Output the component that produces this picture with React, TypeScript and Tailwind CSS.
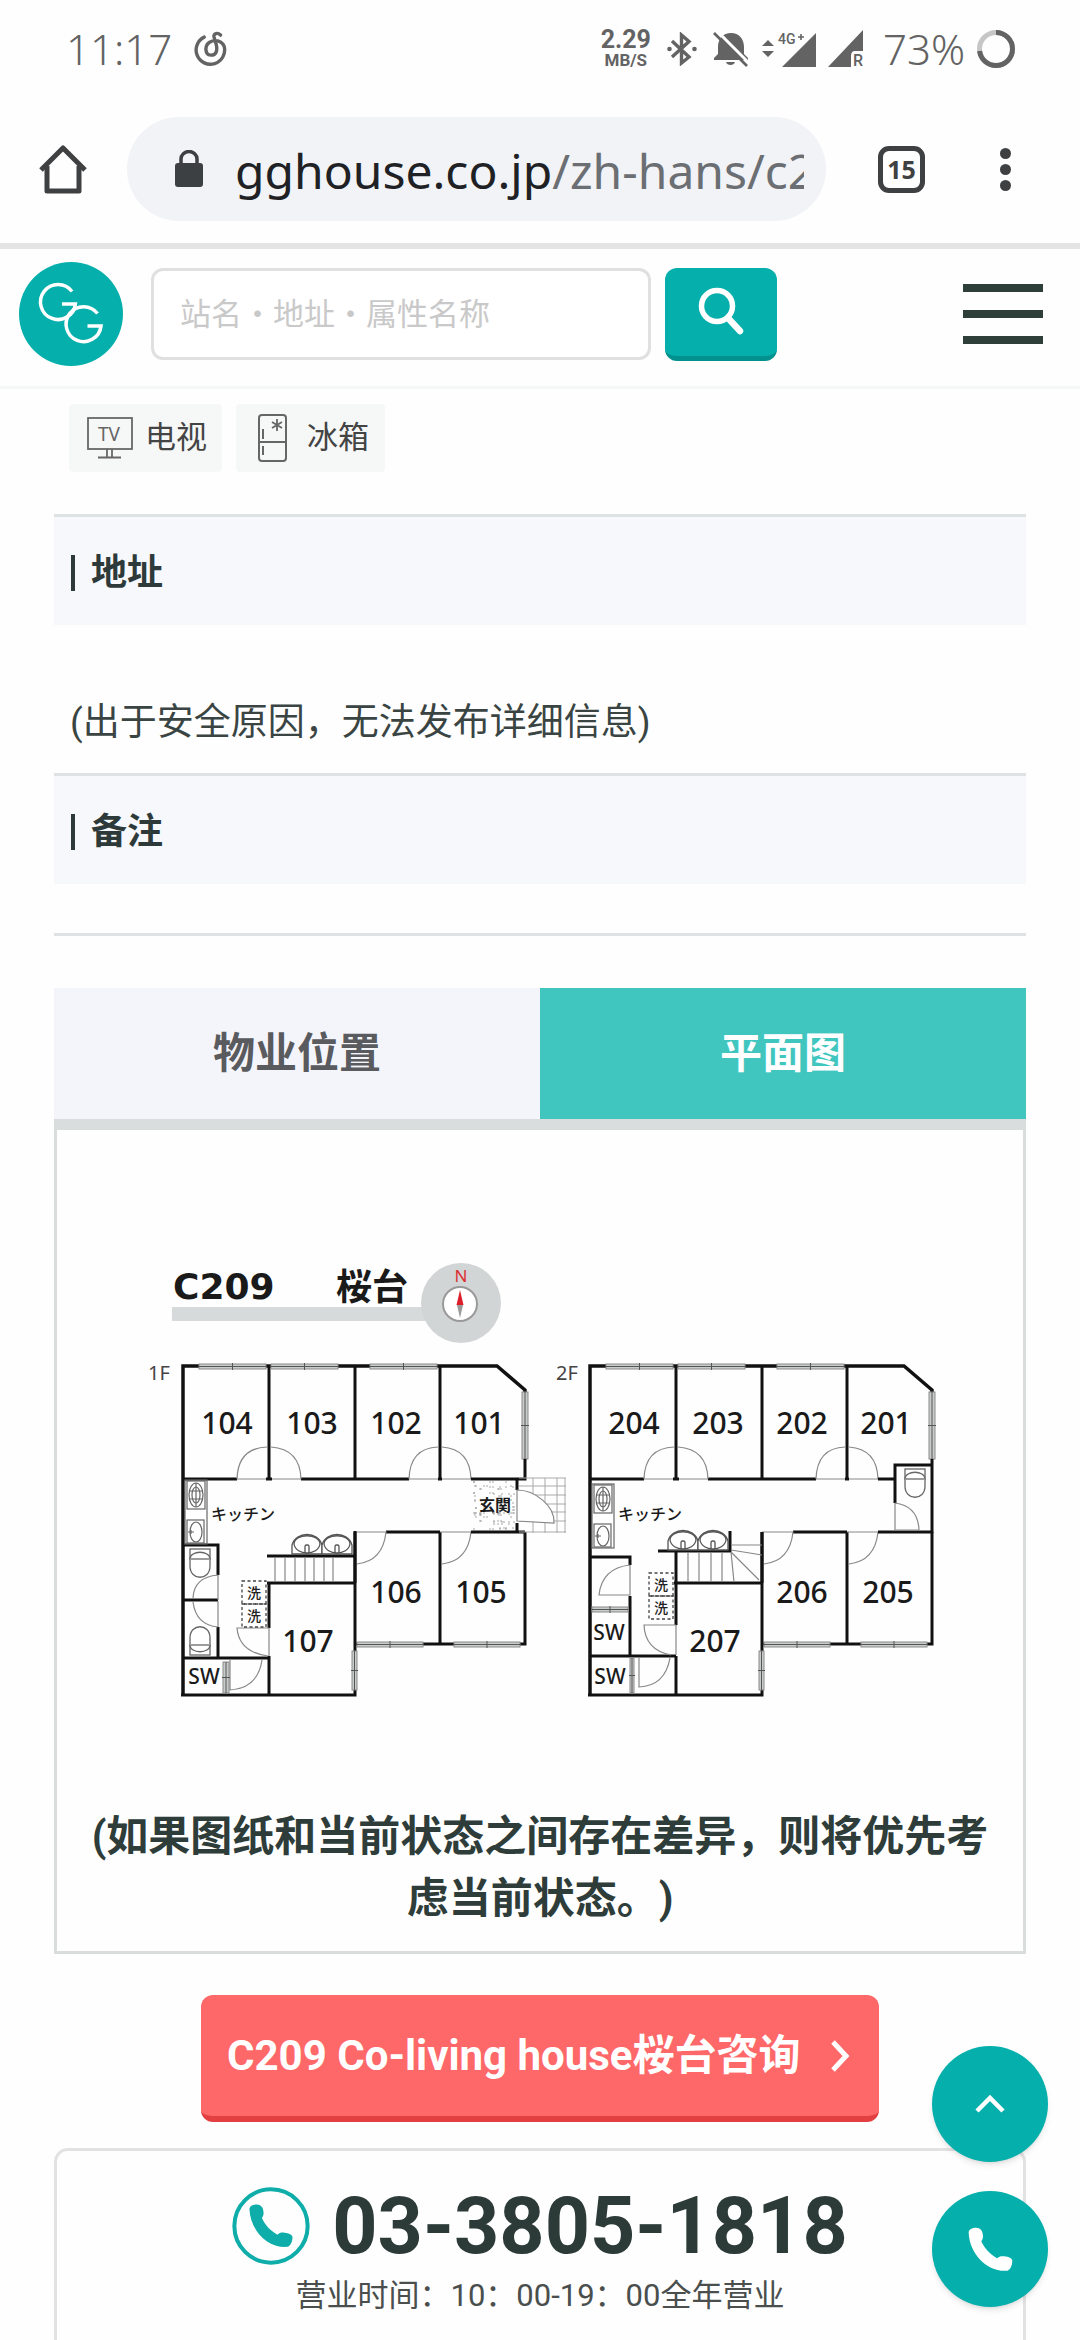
import React from "react";

const GREY = "#636363";

function MusicIcon() {
  return (
    <svg viewBox="582 62 100 106" className="h-[36px] w-[34px]" fill="none" stroke={GREY} strokeWidth="10" strokeLinecap="round" aria-hidden="true">
      <path d="M612 80 A42 42 0 1 0 671 108 C664 90 642 86 628 95 C612 105 614 132 631 133 C648 134 651 119 648 104 L641 80 C639 68 652 66 660 74" />
    </svg>
  );
}

function BluetoothIcon() {
  return (
    <svg viewBox="0 0 30 34" className="h-[34px] w-[30px]" fill="none" stroke={GREY} strokeWidth="3.4" aria-hidden="true">
      <path d="M5 9 L22 25 L14.500 31 V3 L22 9.500 L5 25" />
      <circle cx="2.500" cy="17" r="2.300" fill={GREY} stroke="none" />
      <circle cx="27.500" cy="17" r="2.300" fill={GREY} stroke="none" />
    </svg>
  );
}

function MutedBellIcon() {
  return (
    <svg viewBox="0 0 36 36" className="h-[36px] w-[36px]" aria-hidden="true">
      <path d="M5 23 V16 C5 8 10 2 18 2 C26 2 31 8 31 16 V23 L35 27 V29 H1 V27 Z" fill={GREY} />
      <path d="M13 31 H22 C21 35 14 35 13 31 Z" fill={GREY} />
      <path d="M4 0 L37 33" stroke="#fff" strokeWidth="3" />
      <path d="M1 2 L34 35" stroke={GREY} strokeWidth="2.600" />
    </svg>
  );
}

function SignalIcon() {
  return (
    <svg viewBox="0 0 55 38" className="h-[38px] w-[55px]" fill={GREY} aria-hidden="true">
      <path d="M0 16 L6 10 L12 16 Z M0 21 L6 27 L12 21 Z" />
      <path d="M20 37 L54 3 V37 Z" />
      <text x="16" y="14" fontSize="14" fontWeight="500" fontFamily="Roboto, sans-serif">4G</text>
      <path d="M36 7 H42 M39 4 V10" stroke={GREY} strokeWidth="1.600" />
    </svg>
  );
}

function RoamingIcon() {
  return (
    <svg viewBox="0 0 36 42" className="h-[42px] w-[36px]" fill={GREY} aria-hidden="true">
      <path d="M0 39 L35 2 V23 H27 Q23 23 23 28 V39 Z" />
      <text x="25" y="38" fontSize="16" fontWeight="500" fontFamily="Roboto, sans-serif">R</text>
    </svg>
  );
}

function BatteryRing() {
  return (
    <svg viewBox="0 0 40 40" className="h-10 w-10" fill="none" strokeWidth="5" aria-hidden="true">
      <circle cx="20" cy="20" r="16.500" stroke="#c6c6c6" />
      <circle cx="20" cy="20" r="16.500" stroke={GREY} pathLength="100" strokeDasharray="73 27" transform="rotate(-90 20 20)" />
    </svg>
  );
}

function StatusBar() {
  return (
    <div className="flex h-[98px] items-center pl-[66px] pr-[64px] font-['Noto_Sans'] text-[42px] font-light leading-none text-[#636363]">
      <span>11:17</span>
      <span className="ml-[22px]"><MusicIcon /></span>
      <div className="ml-auto flex items-center">
        <div className="flex flex-col items-center font-['Roboto'] font-bold">
          <span className="text-[25px] leading-[22px]">2.29</span>
          <span className="text-[17px] leading-[18px]">MB/S</span>
        </div>
        <span className="ml-[16px]"><BluetoothIcon /></span>
        <span className="ml-[16px]"><MutedBellIcon /></span>
        <span className="ml-[13px]"><SignalIcon /></span>
        <span className="ml-[11px]"><RoamingIcon /></span>
        <span className="ml-[19px]">73%</span>
        <span className="ml-[11px]"><BatteryRing /></span>
      </div>
    </div>
  );
}

function BrowserBar() {
  return (
    <div className="flex items-center pb-[22px] pl-[39px] pr-[69px] pt-[19px]">
      <button type="button" aria-label="主页" className="shrink-0">
        <svg viewBox="0 0 48 50" className="h-[50px] w-12" fill="none" stroke="#3f4042" strokeWidth="5" strokeLinejoin="round" aria-hidden="true">
          <path d="M2 26 L24 4 L46 26" />
          <path d="M8 22 V47 H40 V22" />
        </svg>
      </button>
      <div className="ml-10 flex h-[104px] min-w-0 flex-1 items-center rounded-full bg-[#f1f3f6] pl-[48px] pr-[22px]">
        <svg viewBox="0 0 28 38" className="h-[38px] w-7 shrink-0" aria-hidden="true">
          <rect x="0" y="13" width="28" height="24" rx="3" fill="#3c4043" />
          <path d="M6 14 V9 a8 7.500 0 0 1 16 0 V14" fill="none" stroke="#3c4043" strokeWidth="3.500" />
        </svg>
        <div className="ml-[32px] min-w-0 flex-1 overflow-hidden whitespace-nowrap pt-[3px] font-['Noto_Sans'] text-[48px] leading-[64px] text-[#202124]">
          gghouse.co.jp<span className="text-[#6b6e72]">/zh-hans/c209</span>
        </div>
      </div>
      <button type="button" aria-label="标签页" className="ml-[52px] flex h-[47px] w-[47px] shrink-0 items-center justify-center rounded-[11px] border-[5px] border-[#3f4042] font-['Noto_Sans'] text-[25px] font-bold leading-none text-[#3f4042]">
        15
      </button>
      <button type="button" aria-label="更多" className="ml-[75px] flex shrink-0 flex-col gap-[5px]">
        <span className="h-[11px] w-[11px] rounded-full bg-[#3f4042]" />
        <span className="h-[11px] w-[11px] rounded-full bg-[#3f4042]" />
        <span className="h-[11px] w-[11px] rounded-full bg-[#3f4042]" />
      </button>
    </div>
  );
}

function SiteHeader() {
  return (
    <header className="flex items-center border-b-[3px] border-t-[6px] border-b-[#f5f6f6] border-t-[#e4e4e4] pb-[20px] pl-[19px] pr-[37px] pt-[13px]">
      <a href="#top" aria-label="GG House" className="shrink-0">
        <svg viewBox="0 0 104 104" className="h-[104px] w-[104px]" fill="none" stroke="#fff" strokeWidth="3.500" aria-hidden="true">
          <circle cx="52" cy="52" r="52" fill="#05afab" stroke="none" />
          <path d="M53 29.500 A17.500 17.500 0 1 0 56.400 42 H43" />
          <path d="M78.500 51.500 A17.500 17.500 0 1 0 82 64 H68.500" />
        </svg>
      </a>
      <form className="ml-[28px] flex min-w-0 items-center gap-[14px]" onSubmit={(e) => e.preventDefault()}>
        <input
          type="search"
          aria-label="站名・地址・属性名称"
          placeholder="站名・地址・属性名称"
          className="h-[92px] w-[500px] min-w-0 rounded-[12px] border-[3px] border-[#e0e0e0] bg-white px-[26px] text-[31px] outline-none placeholder:text-[#c9c9c9]"
        />
        <button type="submit" aria-label="搜索" className="flex h-[93px] w-[112px] shrink-0 items-center justify-center rounded-[12px] border-b-[5px] border-[#03918e] bg-[#05afab]">
          <svg viewBox="0 0 48 50" className="h-[50px] w-12" fill="none" stroke="#fff" strokeWidth="5.500" strokeLinecap="round" aria-hidden="true">
            <circle cx="20" cy="19" r="15.500" />
            <path d="M31 31 L43 44" strokeWidth="6.500" />
          </svg>
        </button>
      </form>
      <button type="button" aria-label="菜单" className="ml-auto flex w-[80px] shrink-0 flex-col gap-[18px]">
        <span className="h-2 bg-[#2e3f3a]" />
        <span className="h-2 bg-[#2e3f3a]" />
        <span className="h-2 bg-[#2e3f3a]" />
      </button>
    </header>
  );
}

function Chips() {
  return (
    <ul className="flex gap-[14px] px-[69px] pt-[15px] text-[31px] text-[#444]">
      <li className="flex h-[68px] items-center gap-[12px] rounded bg-[#f6f7f7] pl-[18px] pr-[15px]">
        <svg viewBox="0 0 46 42" className="h-[42px] w-[46px]" fill="none" stroke="#666" strokeWidth="1.800" aria-hidden="true">
          <rect x="1" y="1" width="44" height="31" />
          <path d="M20 32 V40 M25 32 V40 M11 40.500 H34" />
          <text x="11" y="24" fontSize="19" stroke="none" fill="#666" fontFamily="Noto Sans, sans-serif">TV</text>
        </svg>
        电视
      </li>
      <li className="flex h-[68px] items-center gap-[20px] rounded bg-[#f6f7f7] pl-[22px] pr-[16px]">
        <svg viewBox="0 0 29 48" className="h-12 w-[29px]" fill="none" stroke="#666" strokeWidth="2" aria-hidden="true">
          <rect x="1" y="1" width="27" height="46" rx="3" />
          <path d="M1 28 H28 M5 15 V25 M5 32 V41" />
          <path d="M19 5 V17 M14 8 L24 14 M24 8 L14 14" strokeWidth="1.800" />
        </svg>
        冰箱
      </li>
    </ul>
  );
}

function SectionTitle({ children }: { children: React.ReactNode }) {
  return (
    <h2 className="flex h-[111px] items-center gap-[16px] border-t-[3px] border-[#dfe2e2] bg-[#f7f8fb] pl-[17px] pt-[3px] text-[36px] font-bold text-[#2e3a39]">
      <span className="h-[36px] w-1 bg-[#2e3a39]" />
      {children}
    </h2>
  );
}

const CJK = '"Noto Sans", "Noto Sans CJK JP", sans-serif';

function WindowBar({ x, y, w, h }: { x: number; y: number; w: number; h: number }) {
  const wide = w > h;
  return (
    <g stroke="#555" strokeWidth="1">
      <rect x={x} y={y} width={w} height={h} fill="#c9cccc" stroke="#8a8a8a" />
      {wide ? (
        <path d={`M${x} ${y + h / 2} H${x + w} M${x + w / 2} ${y - 1} V${y + h + 1}`} />
      ) : (
        <path d={`M${x + w / 2} ${y} V${y + h} M${x - 1} ${y + h / 2} H${x + w + 1}`} />
      )}
    </g>
  );
}

function Toilet({ x, y, flip }: { x: number; y: number; flip?: boolean }) {
  return (
    <g transform={`translate(${x} ${y})${flip ? " scale(1 -1)" : ""}`} fill="none" stroke="#666" strokeWidth="1.300">
      <rect x="-10" y="0" width="20" height="10" />
      <path d="M-10 10 C-10 1 10 1 10 10 V17 C10 32 -10 32 -10 17 Z" fill="#fff" />
      <path d="M-9 10 H9" />
    </g>
  );
}

function Kitchen({ x, y }: { x: number; y: number }) {
  return (
    <g transform={`translate(${x} ${y})`} fill="none" stroke="#666" strokeWidth="1.200">
      <rect x="0" y="0" width="22" height="64" />
      <rect x="2" y="1" width="18" height="28" />
      <ellipse cx="11" cy="15" rx="7" ry="12" />
      <ellipse cx="11" cy="15" rx="4" ry="8" />
      <path d="M11 3 V27 M4 11 H18 M4 19 H18" />
      <rect x="2" y="40" width="17" height="23" />
      <ellipse cx="11" cy="52" rx="6" ry="10" />
      <path d="M3 52 H9 M6 50 V54" />
    </g>
  );
}

function Basins({ x, y }: { x: number; y: number }) {
  return (
    <g transform={`translate(${x} ${y})`} fill="#fff" stroke="#555" strokeWidth="1.300">
      {[0, 30].map((dx) => (
        <g key={dx} transform={`translate(${dx} 0)`}>
          <path d="M0 20 V11 C4 -3 26 -3 30 11 V20 Z" />
          <path d="M2 10 C2 -1 28 -1 28 10 C26 22 4 22 2 10 Z" />
          <rect x="13" y="11" width="4" height="8" rx="1.500" />
        </g>
      ))}
    </g>
  );
}

function Washers({ x, y }: { x: number; y: number }) {
  return (
    <g>
      <g fill="none" stroke="#444" strokeWidth="1.300" strokeDasharray="3 2.500">
        <rect x={x} y={y} width="24" height="23" />
        <rect x={x} y={y + 23} width="24" height="23" />
      </g>
      <g fontSize="14" fontWeight="500" fontFamily={CJK} fill="#222" textAnchor="middle">
        <text x={x + 12} y={y + 17}>洗</text>
        <text x={x + 12} y={y + 40}>洗</text>
      </g>
    </g>
  );
}

/* Walls, windows and doors that both storeys share, in first-floor coordinates. */
function Storey() {
  return (
    <g>
      <g fill="none" stroke="#111" strokeWidth="3">
        <path d="M183 1696 V1366 H497 L525 1390 V1459" strokeWidth="3.500" />
        <path d="M269 1366 V1479 M355 1366 V1479 M440 1366 V1479" />
        <path d="M183 1479 H237 M266 1479 H272 M301 1479 H409 M438 1479 H442" />
        <path d="M355 1532 V1695 H181" />
        <path d="M386 1532 H440 M440 1532 V1644 M525 1532 V1644 H355" />
        <path d="M267 1583 H355 M269 1656 V1696" />
      </g>
      <g fill="none" stroke="#888" strokeWidth="1.200">
        <path d="M237 1479 Q238 1448 267 1447 M271 1447 Q300 1449 301 1479" />
        <path d="M409 1479 Q410 1448 438 1447 M442 1447 Q470 1449 471 1479" />
        <path d="M355 1532 H386 Q383 1561 357 1564 M440 1532 H471 Q468 1561 442 1564" />
        <path d="M237 1479 H266 M272 1479 H301 M409 1479 H438 M442 1479 H471" />
      </g>
      <WindowBar x={199} y={1364} w={67} h={5} />
      <WindowBar x={271} y={1364} w={67} h={5} />
      <WindowBar x={370} y={1364} w={67} h={5} />
      <WindowBar x={522} y={1392} w={6} h={67} />
      <WindowBar x={357} y={1642} w={66} h={5} />
      <WindowBar x={454} y={1642} w={66} h={5} />
      <WindowBar x={352} y={1651} w={5} h={39} />
    </g>
  );
}

/* Stippling of the entrance floor. */
const SPECKS: [number, number][] = Array.from({ length: 110 }, (_, i) => [
  474 + ((i * i * 7 + i * 13) % 41),
  1482 + ((i * i * 11 + i * 29) % 49),
]);

const ROOMS: [string, number, number][] = [
  ["104", 227, 1434], ["103", 312, 1434], ["102", 396, 1434], ["101", 479, 1434],
  ["106", 396, 1603], ["105", 481, 1603], ["107", 308, 1652],
  ["204", 634, 1434], ["203", 718, 1434], ["202", 802, 1434], ["201", 886, 1434],
  ["206", 802, 1603], ["205", 888, 1603], ["207", 715, 1652],
];

function FloorPlan() {
  return (
    <svg viewBox="57 1230 966 500" className="block w-full" role="img" aria-label="C209 桜台 平面图">
      <path d="M172 1307 H430 V1321 H172 Z" fill="#d7dada" />
      <circle cx="461" cy="1303" r="40" fill="#d2d5d5" />
      <circle cx="460" cy="1304" r="17" fill="#fff" stroke="#999" strokeWidth="2" />
      <path d="M460 1290 L463.500 1305 H456.500 Z" fill="#dc1f2b" />
      <path d="M460 1318 L463 1305 H457 Z" fill="#9a9a9a" />
      <text x="461" y="1282" fontSize="17" fill="#dc3030" textAnchor="middle" fontFamily={CJK}>N</text>
      <text x="173" y="1299" fontSize="36" fontWeight="700" fill="#1a1a1a" fontFamily="DejaVu Sans, sans-serif">C209</text>
      <text x="336" y="1300" fontSize="36" fontWeight="700" fill="#1a1a1a" fontFamily={'"Noto Sans CJK JP", sans-serif'}>桜台</text>

      <Storey />
      <g transform="translate(407 0)"><Storey /></g>

      {/* First floor */}
      <g fill="none" stroke="#111" strokeWidth="3">
        <path d="M471 1479 H525 V1459 M471 1532 H525 M517 1479 V1490 M517 1523 V1533" />
        <path d="M183 1545 H218 V1575 M183 1600 H218 M218 1627 V1658 M183 1658 H269" />
        <path d="M355 1531 V1583 M267 1556 H355 M269 1582 V1628" />
      </g>
      <path d="M519 1478 H566 M519 1486 H566 M519 1495 H566 M519 1504 H566 M519 1512 H566 M519 1521 H566 M519 1532 H566 M533 1478 V1533 M545 1478 V1533 M557 1478 V1533 M565 1478 V1533" stroke="#aaa" strokeWidth="1" fill="none" />
      <path d="M517 1490 C535 1490 555 1506 554 1523 L517 1521 Z" fill="#fff" stroke="#888" strokeWidth="1.200" />
      <g fill="#888">
        {SPECKS.map(([x, y], i) => <circle key={i} cx={x} cy={y} r="0.700" />)}
      </g>
      <g fill="none" stroke="#888" strokeWidth="1.200">
        <path d="M218 1575 V1600 M218 1575 Q194 1577 193 1598 M218 1601 V1627 M193 1602 Q196 1625 218 1627" />
        <path d="M269 1628 H237 Q239 1652 268 1656 M269 1628 V1656" />
        <path d="M230 1660 V1690 Q258 1688 262 1660" />
        <path d="M275 1557 V1582 M285 1557 V1582 M295 1557 V1582 M305 1557 V1582 M314 1557 V1582 M324 1557 V1582 M333 1557 V1582" />
      </g>
      <WindowBar x={223} y={1662} w={6} h={31} />
      <Kitchen x={185} y={1480} />
      <Toilet x={200} y={1549} />
      <Toilet x={200} y={1655} flip />
      <Basins x={292} y={1534} />
      <Washers x={242} y={1581} />

      {/* Second floor */}
      <g fill="none" stroke="#111" strokeWidth="3">
        <path d="M878 1479 H895 M895 1503 V1465 H932 M932 1459 V1533 M878 1532 H932" />
        <path d="M590 1557 H630 V1565 M630 1596 V1656 M590 1656 H676" />
        <path d="M658 1551 H730 V1531 M676 1551 V1625 M762 1532 V1583" />
      </g>
      <g fill="none" stroke="#888" strokeWidth="1.200">
        <path d="M895 1503 V1530 H919 Q918 1506 895 1503" />
        <path d="M630 1565 V1595 H599 Q602 1568 630 1565" />
        <path d="M676 1625 H644 Q645 1650 671 1655 M676 1625 V1655" />
        <path d="M639 1658 V1687 Q665 1686 670 1658" />
        <path d="M688 1552 V1582 M699 1552 V1582 M711 1552 V1582 M722 1552 V1582 M731 1552 L734 1582 M731 1552 L759 1580 M731 1550 L762 1555 M731 1545 H762" />
      </g>
      <WindowBar x={592} y={1607} w={36} h={5} />
      <WindowBar x={630} y={1658} w={4} h={35} />
      <Kitchen x={592} y={1484} />
      <Toilet x={915} y={1469} />
      <Basins x={668} y={1530} />
      <Washers x={649} y={1573} />

      <g fill="#1a1a1a" fontFamily={CJK} textAnchor="middle">
        <g fontSize="30" fontWeight="500">
          {ROOMS.map(([label, x, y]) => <text key={label} x={x} y={y}>{label}</text>)}
        </g>
        <g fontSize="21" fontWeight="500">
          <text x="204" y="1684">SW</text>
          <text x="609" y="1640">SW</text>
          <text x="610" y="1684">SW</text>
        </g>
        <g fontSize="16" fontWeight="500">
          <text x="243" y="1520">キッチン</text>
          <text x="650" y="1520">キッチン</text>
          <text x="495" y="1511" fontWeight="700">玄関</text>
        </g>
        <g fontSize="20" fill="#444">
          <text x="159" y="1380">1F</text>
          <text x="567" y="1380">2F</text>
        </g>
      </g>
    </svg>
  );
}

const HANDSET =
  "M220 244 C219 233 230 228 242 228 C254 229 260 236 261 246 C263 256 262 261 257 268 C266 289 282 305 303 318 C309 312 316 311 324 312 C338 313 347 318 348 325 C348 337 343 351 334 354 C272 359 223 303 220 244 Z";

function InquiryButton() {
  return (
    <a href="#inquiry" className="mx-auto mt-[41px] flex h-[127px] w-[678px] max-w-full items-center rounded-[12px] border-b-[6px] border-[#e23f41] bg-[#ff6868] pl-[26px] pr-[29px] text-[42px] font-bold leading-none text-white">
      <span className="whitespace-nowrap font-['Roboto','Noto_Sans_CJK_JP',sans-serif]">C209 Co-living house桜台咨询</span>
      <svg viewBox="0 0 20 34" className="ml-auto h-[34px] w-5" fill="none" stroke="#fff" strokeWidth="5" aria-hidden="true">
        <path d="M3 3 L16 17 L3 31" />
      </svg>
    </a>
  );
}

function ContactCard() {
  return (
    <div className="mt-[26px] rounded-[14px] border-[3px] border-[#e2e2e2] pb-[32px] pt-[33px] text-center">
      <a href="tel:03-3805-1818" className="flex items-center justify-center gap-[22px] text-[79px] font-bold leading-[84px] text-[#2c3b38]">
        <svg viewBox="168 176 232 232" className="h-[78px] w-[78px]" aria-hidden="true">
          <circle cx="284" cy="292" r="109" fill="none" stroke="#0fada9" strokeWidth="12" />
          <path d={HANDSET} fill="#0fada9" />
        </svg>
        03-3805-1818
      </a>
      <p className="pt-1 text-[31px] leading-[48px] text-[#4a4f4e]">营业时间：10：00-19：00全年营业</p>
    </div>
  );
}

export default function App() {
  return (
    <div id="top" className="h-screen overflow-hidden bg-[#fefefe] font-['Roboto','Noto_Sans_CJK_SC',sans-serif] [text-spacing-trim:space-all]">
      <StatusBar />
      <BrowserBar />
      <SiteHeader />
      <main>
        <Chips />
        <div className="mx-[54px] mt-[42px]">
          <section>
            <SectionTitle>地址</SectionTitle>
            <p className="pb-[22px] pl-[16px] pt-[70px] text-[37px] leading-[56px] text-[#3a4543]">(出于安全原因，无法发布详细信息)</p>
          </section>
          <section className="border-b-[3px] border-[#dfe2e2] pb-[49px]">
            <SectionTitle>备注</SectionTitle>
          </section>

          <section className="mt-[52px]">
            <div role="tablist" className="grid grid-cols-2 text-[42px] font-bold leading-none">
              <button type="button" role="tab" aria-selected="false" className="h-[131px] bg-[#f4f5fa] text-[#5a5b5e]">物业位置</button>
              <button type="button" role="tab" aria-selected="true" className="h-[131px] bg-[#40c6bf] text-white">平面图</button>
            </div>
            <div role="tabpanel" className="border-[3px] border-t-[11px] border-[#dadddd] pb-[21px] pt-[100px]">
              <FloorPlan />
              <p className="px-[28px] pt-[76px] text-center text-[42px] font-bold leading-[62px] text-[#2e3d3a]">
                (如果图纸和当前状态之间存在差异，则将优先考虑当前状态。)
              </p>
            </div>
          </section>

          <InquiryButton />
          <ContactCard />
        </div>
      </main>

      <div className="fixed bottom-[33px] right-[32px] flex flex-col gap-[29px]">
        <a href="#top" aria-label="返回顶部" className="flex h-[116px] w-[116px] items-center justify-center rounded-full bg-[#05afab] shadow-md">
          <svg viewBox="0 0 30 20" className="h-5 w-[30px]" fill="none" stroke="#fff" strokeWidth="4.500" aria-hidden="true">
            <path d="M2 17 L15 4 L28 17" />
          </svg>
        </a>
        <a href="tel:03-3805-1818" aria-label="拨打电话" className="flex h-[116px] w-[116px] items-center justify-center rounded-full bg-[#05afab] shadow-md">
          <svg viewBox="218 226 132 132" className="h-[45px] w-[45px]" aria-hidden="true">
            <path d={HANDSET} fill="#fff" />
          </svg>
        </a>
      </div>
    </div>
  );
}
